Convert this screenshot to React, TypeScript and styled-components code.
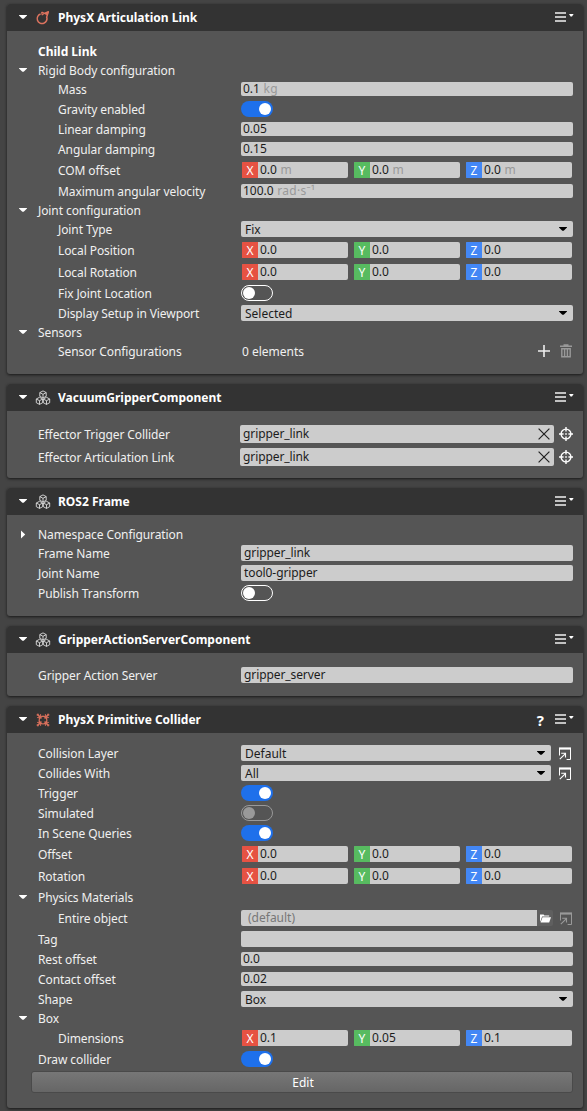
import React from 'react';
import styled, { createGlobalStyle, css } from 'styled-components';

const GlobalStyle = createGlobalStyle`
  * { box-sizing: border-box; }
  body {
    margin: 0;
    background: #444444;
    color: #ffffff;
    font: 12px/20px "Noto Sans", "Open Sans", sans-serif;
  }
`;

const Inspector = styled.main`
  display: flex;
  flex-direction: column;
  gap: 10px;
  width: 587px;
  height: 1111px;
  padding: 4px 4px 0 7px;
  overflow: hidden;
`;

const Card = styled.section`
  border-radius: 3px;
  background: #555555;
  box-shadow: 0 1px 3px rgba(0, 0, 0, 0.65);
`;

const CardHeader = styled.header`
  display: flex;
  align-items: center;
  height: 27px;
  padding: 0 9px 0 12px;
  border-radius: 3px 3px 0 0;
  background: #333333;
`;

const HeaderArrow = styled.span`
  display: flex;
  margin-bottom: 1px;
`;

const CardIcon = styled.span`
  display: flex;
  width: 16px;
  height: 16px;
  margin: 0 7px 0 8px;
`;

const CardTitle = styled.h2`
  flex: 1;
  margin: 0;
  font-size: 12px;
  font-weight: 700;
  line-height: 20px;
`;

const HelpMark = styled.span`
  margin-right: 11px;
  font-size: 15px;
  font-weight: 700;
`;

const CardBody = styled.div<{ $top: number }>`
  padding: ${p => p.$top}px 10px 0 0;
`;

const RowLine = styled.div<{ $h: number }>`
  display: flex;
  align-items: flex-start;
  height: ${p => p.$h}px;
`;

const Gutter = styled.span<{ $indent?: boolean }>`
  display: flex;
  align-items: center;
  flex: none;
  width: ${p => (p.$indent ? 51 : 31)}px;
  height: 20px;
  padding-left: 12px;
`;

const Label = styled.span<{ $indent?: boolean; $bold?: boolean }>`
  flex: none;
  width: ${p => (p.$indent ? 183 : 203)}px;
  font-weight: ${p => (p.$bold ? 700 : 400)};
  color: ${p => (p.$bold ? '#ffffff' : '#f0f0f0')};
  letter-spacing: ${p => (p.$bold ? 0 : -0.09)}px;
  line-height: 21px;
  white-space: nowrap;
`;

const Control = styled.div`
  display: flex;
  flex: 1;
  align-items: center;
  min-width: 0;
  height: 20px;
`;

const field = css`
  border-radius: 2px;
  background: #cccccc;
  color: #1c1c1c;
  white-space: nowrap;
`;

const NumberField = styled.div`
  ${field}
  flex: 1;
  height: 14px;
  padding-left: 2px;
  line-height: 13px;
`;

const Unit = styled.span`
  margin-left: 3.5px;
  color: #999999;
  letter-spacing: 0.3px;
`;

const TextField = styled.div`
  ${field}
  flex: 1;
  height: 16px;
  padding-left: 3px;
  line-height: 15px;
  letter-spacing: -0.09px;
`;

const EntityField = styled.div`
  ${field}
  display: flex;
  flex: none;
  justify-content: space-between;
  align-items: center;
  width: 314px;
  height: 18px;
  margin-left: -1px;
  padding: 0 4px 0 3px;
  line-height: 17px;
  letter-spacing: -0.09px;
`;

const EntityName = styled.span`
  height: 18px;
`;

const AssetField = styled.div`
  ${field}
  flex: none;
  width: 296px;
  height: 16px;
  padding-left: 7px;
  border-radius: 2px 0 0 2px;
  line-height: 15px;
  color: #777777;
`;

const BrowseButton = styled.button`
  display: flex;
  align-items: center;
  justify-content: center;
  width: 16px;
  height: 16px;
  padding: 0;
  border: 0;
  border-radius: 0 2px 2px 0;
  background: #5f5f5f;
`;

const ComboBox = styled.div<{ $short?: boolean }>`
  ${field}
  display: flex;
  flex: none;
  align-items: center;
  justify-content: space-between;
  width: ${p => (p.$short ? 310 : 332)}px;
  height: 16px;
  padding: 0 6px 0 4px;
`;

const ComboValue = styled.span`
  height: 16px;
  line-height: 17px;
`;

const SideIcon = styled.span<{ $gap: number; $dim?: boolean }>`
  display: flex;
  margin-left: ${p => p.$gap}px;
  opacity: ${p => (p.$dim ? 0.4 : 1)};
`;

const VectorGroup = styled.div`
  display: grid;
  grid-template-columns: repeat(3, 106px);
  gap: 6px;
  padding-left: 1px;
`;

const AxisField = styled.div`
  ${field}
  display: flex;
  height: 16px;
`;

const AxisTag = styled.span<{ $color: string }>`
  width: 16px;
  border-radius: 1px 0 0 1px;
  background: ${p => p.$color};
  color: #ffffff;
  line-height: 17px;
  text-align: center;
`;

const AxisValue = styled.span`
  padding-left: 2px;
  line-height: 15px;
`;

const Switch = styled.span<{ $on?: boolean; $disabled?: boolean }>`
  display: flex;
  align-items: center;
  justify-content: ${p => (p.$on ? 'flex-end' : 'flex-start')};
  width: 32px;
  height: 16px;
  padding: 0 ${p => (p.$on ? 2 : 1)}px;
  border: ${p => (p.$on ? '0' : `1px solid ${p.$disabled ? '#999999' : '#ffffff'}`)};
  border-radius: 8px;
  background: ${p => (p.$on ? '#1e70eb' : 'transparent')};

  &::after {
    content: '';
    width: 12px;
    height: 12px;
    border-radius: 50%;
    background: ${p => (p.$disabled ? '#999999' : '#ffffff')};
  }
`;

const ElementCount = styled.span`
  flex: 1;
  height: 20px;
  padding-left: 1px;
  color: #f0f0f0;
  line-height: 21px;
`;

const ElementActions = styled.span`
  display: flex;
  align-items: center;
  gap: 10px;
  padding-right: 1px;
`;

const EditButton = styled.button`
  display: block;
  width: 543px;
  height: 22px;
  margin-left: 24px;
  padding: 0 0 0 2px;
  border: 1px solid #4a4a4a;
  border-radius: 3px;
  background: linear-gradient(#777777, #666666);
  color: #ffffff;
  font: inherit;
  line-height: 21px;
`;

const DownArrow = ({ color = '#ffffff' }: { color?: string }) => (
  <svg width="8" height="4" viewBox="0 0 8 4">
    <path d="M0 0h8v.5L5.2 3.2Q4 4.4 2.8 3.2L0 .5Z" fill={color} />
  </svg>
);

const RightArrow = () => (
  <svg width="8" height="9" viewBox="0 0 8 9">
    <path d="M2 0.4v8.2L6.2 4.5Z" fill="#ffffff" />
  </svg>
);

const MenuIcon = () => (
  <svg width="19" height="11" viewBox="0 0 19 11">
    <path d="M0 1h11M0 5h11M0 9h11" stroke="#f2f2f2" strokeWidth="1.7" />
    <path d="M14 2h4.6l-1.6 2.6h-1.4Z" fill="#ffffff" />
  </svg>
);

const ArticulationIcon = () => (
  <svg width="16" height="16" viewBox="0 0 16 16" fill="none" stroke="#dc735f" strokeWidth="1.5" strokeLinejoin="round">
    <path d="M5.6 4A4.9 4.9 0 1 0 11.6 6.8" />
    <path d="M6.6 2.1 9.4 3.4 13.4 1.7 12.4 5.1 11.5 7.4" strokeWidth="1.3" />
    <path d="M6.6 2.1 7.2 4.9 9.4 3.4" strokeWidth="1.1" />
    <path d="M9.4 3.6 13.4 1.7 12.2 5.4Z" fill="#dc735f" strokeWidth=".5" />
  </svg>
);

const ColliderIcon = () => (
  <svg width="16" height="16" viewBox="0 0 16 16" fill="none" stroke="#d9705c">
    <path d="M5 5.2 8 4.2l3 1 .9 3-.9 3-3 .8-3-.8-.9-3Z" strokeWidth="1.2" />
    <path d="m2.4 2.4 3.4 3.4M13.6 2.4l-3.4 3.4M2.4 13.6l3.4-3.4M13.6 13.6l-3.4-3.4" strokeWidth="1.6" />
    <path d="M2.2 5.5 6 6 5.5 2.2M13.8 5.5 10 6l.5-3.8M2.2 10.5 6 10l-.5 3.8M13.8 10.5 10 10l.5 3.8" strokeWidth="1.1" />
    <path d="M2.2 3.6v-1.4h1.4M12.4 2.2h1.4v1.4M2.2 12.4v1.4h1.4M12.4 13.8h1.4v-1.4" strokeWidth="1" />
  </svg>
);

const Cube = ({ x, y }: { x: number; y: number }) => (
  <path transform={`translate(${x} ${y})`} d="M0-3.6 3.2-1.9V1.8L0 3.5-3.2 1.8V-1.9ZM-3.2-1.9 0-.2 3.2-1.9M0-.2V3.5" />
);

const ComponentIcon = () => (
  <svg width="16" height="16" viewBox="0 0 16 16" fill="none" stroke="#e6e6e6" strokeWidth="0.85">
    <Cube x={8} y={4.5} />
    <Cube x={4.5} y={10.9} />
    <Cube x={11.5} y={10.9} />
  </svg>
);

const PlusIcon = () => (
  <svg width="12" height="12" viewBox="0 0 12 12">
    <path d="M6 0v12M0 6h12" stroke="#eeeeee" strokeWidth="1.6" />
  </svg>
);

const TrashIcon = () => (
  <svg width="12" height="14" viewBox="0 0 12 14" fill="none" stroke="#999999">
    <path d="M0 2.3h12M3.5 1h5" strokeWidth="1.6" />
    <path d="M1.8 4.7h8.4v8H1.8ZM4.6 4.7v8M7.4 4.7v8" strokeWidth="1.4" />
  </svg>
);

const ClearIcon = () => (
  <svg width="12" height="12" viewBox="0 0 12 12">
    <path d="m.6.6 10.8 10.8M11.4.6.6 11.4" stroke="#222222" strokeWidth="1.2" />
  </svg>
);

const TargetIcon = () => (
  <svg width="14" height="14" viewBox="0 0 14 14" fill="none" stroke="#ffffff">
    <circle cx="7" cy="7" r="4.9" strokeWidth="1.4" />
    <path d="M7 0v4.6M7 9.4V14M0 7h4.6M9.4 7H14" strokeWidth="1.4" />
    <path d="M6.2 7h1.6" strokeWidth="1.6" />
  </svg>
);

const OpenIcon = () => (
  <svg width="12" height="13" viewBox="0 0 12 13" fill="none" stroke="#ffffff">
    <path d="M0 1.5h12" strokeWidth="2.2" />
    <path d="M.5 1v7.5M11.5 1v11.5H7.6" strokeWidth="1" />
    <path d="m.8 12.2 5.4-5.4M2.2 6.3h4.3v4.3" strokeWidth="1.1" />
  </svg>
);

const FolderIcon = () => (
  <svg width="11" height="9" viewBox="0 0 11 9" fill="#ffffff">
    <path d="M0 .4h3.6l.8 1h4.8v1.2H2.1L.4 7.4H0Z" />
    <path d="M2.5 3.3H11L9.2 8.6H.6Z" />
  </svg>
);

const AXES = [
  { name: 'X', color: '#e65243' },
  { name: 'Y', color: '#57bb60' },
  { name: 'Z', color: '#4387f5' },
];

const Vector = ({ values, unit }: { values: string[]; unit?: string }) => (
  <VectorGroup>
    {AXES.map((axis, i) => (
      <AxisField key={axis.name}>
        <AxisTag $color={axis.color}>{axis.name}</AxisTag>
        <AxisValue>
          {values[i]}
          {unit && <Unit>{unit}</Unit>}
        </AxisValue>
      </AxisField>
    ))}
  </VectorGroup>
);

const Num = ({ value, unit }: { value: string; unit?: string }) => (
  <NumberField>
    {value}
    {unit && <Unit>{unit}</Unit>}
  </NumberField>
);

const Combo = ({ value, short }: { value: string; short?: boolean }) => (
  <>
    <ComboBox $short={short}>
      <ComboValue>{value}</ComboValue>
      <DownArrow color="#000000" />
    </ComboBox>
    {short && (
      <SideIcon $gap={8}>
        <OpenIcon />
      </SideIcon>
    )}
  </>
);

const Entity = ({ value }: { value: string }) => (
  <>
    <EntityField>
      <EntityName>{value}</EntityName>
      <ClearIcon />
    </EntityField>
    <SideIcon $gap={5}>
      <TargetIcon />
    </SideIcon>
  </>
);

interface RowProps {
  h: number;
  label: string;
  indent?: boolean;
  bold?: boolean;
  arrow?: 'down' | 'right';
  children?: React.ReactNode;
}

const Row = ({ h, label, indent, bold, arrow, children }: RowProps) => (
  <RowLine $h={h}>
    <Gutter $indent={indent}>
      {arrow === 'down' && <DownArrow />}
      {arrow === 'right' && <RightArrow />}
    </Gutter>
    <Label $indent={indent} $bold={bold}>{label}</Label>
    <Control>{children}</Control>
  </RowLine>
);

interface PanelProps {
  title: string;
  icon: React.ReactNode;
  top: number;
  help?: boolean;
  children: React.ReactNode;
}

const Panel = ({ title, icon, top, help, children }: PanelProps) => (
  <Card>
    <CardHeader>
      <HeaderArrow><DownArrow /></HeaderArrow>
      <CardIcon>{icon}</CardIcon>
      <CardTitle>{title}</CardTitle>
      {help && <HelpMark>?</HelpMark>}
      <MenuIcon />
    </CardHeader>
    <CardBody $top={top}>{children}</CardBody>
  </Card>
);

export default function App() {
  return (
    <Inspector>
      <GlobalStyle />

      <Panel title="PhysX Articulation Link" icon={<ArticulationIcon />} top={10}>
        <Row h={19} label="Child Link" bold />
        <Row h={19} label="Rigid Body configuration" arrow="down" />
        <Row h={20} label="Mass" indent><Num value="0.1" unit="kg" /></Row>
        <Row h={20} label="Gravity enabled" indent><Switch $on /></Row>
        <Row h={20} label="Linear damping" indent><Num value="0.05" /></Row>
        <Row h={21} label="Angular damping" indent><Num value="0.15" /></Row>
        <Row h={21} label="COM offset" indent><Vector values={['0.0', '0.0', '0.0']} unit="m" /></Row>
        <Row h={19} label="Maximum angular velocity" indent><Num value="100.0" unit="rad·s⁻¹" /></Row>
        <Row h={19} label="Joint configuration" arrow="down" />
        <Row h={21} label="Joint Type" indent><Combo value="Fix" /></Row>
        <Row h={22} label="Local Position" indent><Vector values={['0.0', '0.0', '0.0']} /></Row>
        <Row h={21} label="Local Rotation" indent><Vector values={['0.0', '0.0', '0.0']} /></Row>
        <Row h={20} label="Fix Joint Location" indent><Switch /></Row>
        <Row h={19} label="Display Setup in Viewport" indent><Combo value="Selected" /></Row>
        <Row h={19} label="Sensors" arrow="down" />
        <Row h={33} label="Sensor Configurations" indent>
          <ElementCount>0 elements</ElementCount>
          <ElementActions>
            <PlusIcon />
            <TrashIcon />
          </ElementActions>
        </Row>
      </Panel>

      <Panel title="VacuumGripperComponent" icon={<ComponentIcon />} top={13}>
        <Row h={23} label="Effector Trigger Collider"><Entity value="gripper_link" /></Row>
        <Row h={31} label="Effector Articulation Link"><Entity value="gripper_link" /></Row>
      </Panel>

      <Panel title="ROS2 Frame" icon={<ComponentIcon />} top={9}>
        <Row h={19} label="Namespace Configuration" arrow="right" />
        <Row h={20} label="Frame Name"><TextField>gripper_link</TextField></Row>
        <Row h={20} label="Joint Name"><TextField>tool0-gripper</TextField></Row>
        <Row h={33} label="Publish Transform"><Switch /></Row>
      </Panel>

      <Panel title="GripperActionServerComponent" icon={<ComponentIcon />} top={12}>
        <Row h={31} label="Gripper Action Server"><TextField>gripper_server</TextField></Row>
      </Panel>

      <Panel title="PhysX Primitive Collider" icon={<ColliderIcon />} top={10} help>
        <Row h={20} label="Collision Layer"><Combo value="Default" short /></Row>
        <Row h={20} label="Collides With"><Combo value="All" short /></Row>
        <Row h={20} label="Trigger"><Switch $on /></Row>
        <Row h={20} label="Simulated"><Switch $disabled /></Row>
        <Row h={21} label="In Scene Queries"><Switch $on /></Row>
        <Row h={22} label="Offset"><Vector values={['0.0', '0.0', '0.0']} /></Row>
        <Row h={21} label="Rotation"><Vector values={['0.0', '0.0', '0.0']} /></Row>
        <Row h={21} label="Physics Materials" arrow="down" />
        <Row h={21} label="Entire object" indent>
          <AssetField>(default)</AssetField>
          <BrowseButton><FolderIcon /></BrowseButton>
          <SideIcon $gap={7} $dim><OpenIcon /></SideIcon>
        </Row>
        <Row h={20} label="Tag"><TextField /></Row>
        <Row h={20} label="Rest offset"><Num value="0.0" /></Row>
        <Row h={20} label="Contact offset"><Num value="0.02" /></Row>
        <Row h={19} label="Shape"><Combo value="Box" /></Row>
        <Row h={20} label="Box" arrow="down" />
        <Row h={21} label="Dimensions" indent><Vector values={['0.1', '0.05', '0.1']} /></Row>
        <Row h={22} label="Draw collider"><Switch $on /></Row>
        <RowLine $h={37}>
          <EditButton>Edit</EditButton>
        </RowLine>
      </Panel>
    </Inspector>
  );
}
